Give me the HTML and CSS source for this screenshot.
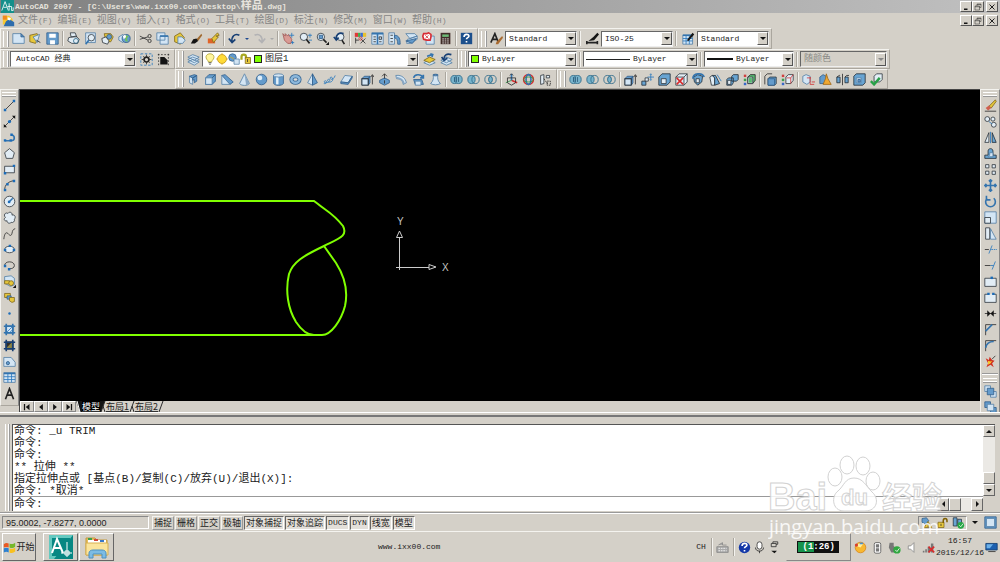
FILE: index.html
```html
<!DOCTYPE html>
<html lang="zh-CN">
<head>
<meta charset="utf-8">
<title>AutoCAD 2007</title>
<link rel="stylesheet" href="styles.css">
</head>
<body>
<svg class="defs" aria-hidden="true">
  <symbol id="union" viewBox="0 0 16 16"><ellipse class="t" cx="5.500" cy="8" rx="4.500" ry="5"/><ellipse class="t" cx="10.500" cy="8" rx="4.500" ry="5"/><path class="k2" d="M5.500 5v6M8 5v6M10.500 5v6"/></symbol>
  <symbol id="subtract" viewBox="0 0 16 16"><ellipse class="t" cx="5.500" cy="8" rx="4.500" ry="5"/><ellipse class="o" cx="10.500" cy="8" rx="4.500" ry="5"/></symbol>
  <symbol id="intersect" viewBox="0 0 16 16"><ellipse class="o" cx="5.500" cy="8" rx="4.500" ry="5"/><ellipse class="o" cx="10.500" cy="8" rx="4.500" ry="5"/><path class="t" d="M8 4c3 2 3 6 0 8-3-2-3-6 0-8z"/></symbol>
  <symbol id="extrude" viewBox="0 0 16 16"><path class="l" d="M1 7h8v8H1z"/><path class="m" d="M1 7l3-3h7L9 7zM9 7l2-3v8l-2 3z"/><path class="k" d="M1 7h8v8H1zM14 14V3M12 5l2-3 2 3"/></symbol>
  <symbol id="box" viewBox="0 0 16 16"><path class="m" d="M2 6l4-4h8v8l-4 4H2z"/><path class="l" d="M2 6h8v8H2z"/><path class="k2" d="M10 6l4-4"/></symbol>
  <symbol id="min" viewBox="0 0 16 16"><path class="d" d="M4 11h7v3H4z"/></symbol>
  <symbol id="restore" viewBox="0 0 16 16"><path class="k" d="M6 6V2h8v7h-3M2 6h9v8H2zM2 7.500h9M6 3h8"/></symbol>
  <symbol id="close" viewBox="0 0 16 16"><path class="kk" d="M3 3l10 10M13 3L3 13"/></symbol>
  <symbol id="layers" viewBox="0 0 16 16"><path class="l" d="M1 11l6-3 8 3-6 4zM1 8l6-3 8 3-6 4zM1 5l6-3 8 3-6 4z"/></symbol>
</svg>

<header class="title">
  <svg class="logo" viewBox="0 0 16 16"><path fill="#138f8b" d="M0 0h16v16H0z"/><path class="w" d="M1 13L5 2l4 11M3 9h4M10 4v9M8 8h5v5h2V9"/></svg>
  <h1>AutoCAD 2007 - [C:\Users\www.ixx00.com\Desktop\<span class="cjk">样品</span>.dwg]</h1>
  <div class="wins">
    <button aria-label="最小化"><svg><use href="#min"/></svg></button><button aria-label="还原"><svg><use href="#restore"/></svg></button><button aria-label="关闭"><svg><use href="#close"/></svg></button>
  </div>
</header>

<nav class="menu">
  <svg class="logo" viewBox="0 0 16 16"><path fill="#f8c830" d="M1 2h8l4 4v7H1z"/><path fill="#f08820" d="M1 2h5v5H1z"/><path fill="#2d6cac" d="M5 9l4-3 6 4v5H2z"/><path fill="#fff" d="M7 4l4 1-1 3-3-1z"/></svg>
  <button>文件<small>(F)</small></button><button>编辑<small>(E)</small></button><button>视图<small>(V)</small></button><button>插入<small>(I)</small></button><button>格式<small>(O)</small></button><button>工具<small>(T)</small></button><button>绘图<small>(D)</small></button><button>标注<small>(N)</small></button><button>修改<small>(M)</small></button><button>窗口<small>(W)</small></button><button>帮助<small>(H)</small></button>
  <div class="wins">
    <button aria-label="最小化图形"><svg><use href="#min"/></svg></button><button aria-label="还原图形"><svg><use href="#restore"/></svg></button><button aria-label="关闭图形"><svg><use href="#close"/></svg></button>
  </div>
</nav>

<div class="row first">
  <div class="bar"><i class="grip"></i>
    <button aria-label="新建"><svg viewBox="0 0 16 16"><path class="l" d="M1 2h10l4 4v8H1z"/><path class="m" d="M11 2v4h4z"/></svg></button>
    <button aria-label="打开"><svg viewBox="0 0 16 16"><path class="y" d="M1 4l9-2 2 3-4 9-7-2z"/><path class="l" d="M5 6l8-3-3 10z"/><path class="k" d="M9 10l5 3"/></svg></button>
    <button aria-label="保存"><svg viewBox="0 0 16 16"><path class="m" d="M1 1h14v14H1z"/><path fill="#fff" d="M4 2h8v5H4zM5 10h6v5H5z"/></svg></button>
    <i class="sep"></i>
    <button aria-label="打印"><svg viewBox="0 0 16 16"><path class="lk" d="M4 1h6l2 5H5zM2 7l9-2 4 4-2 5H6L1 11z"/><circle class="o" cx="11" cy="11" r="3"/></svg></button>
    <button aria-label="打印预览"><svg viewBox="0 0 16 16"><path class="l" d="M2 1h12v12H2z"/><circle class="lk" cx="9" cy="7" r="4"/><path class="bb" d="M6 10l-4 5"/></svg></button>
    <button aria-label="发布"><svg viewBox="0 0 16 16"><path class="y" d="M4 2h8l3 4-3 6H6z"/><circle class="m" cx="10" cy="6" r="3"/><path class="lk" d="M1 8l5-2 4 5-2 4-6-2z"/></svg></button>
    <button aria-label="三维 DWF"><svg viewBox="0 0 16 16"><path class="l" d="M1 6l5-3 3 5-3 5-5-3z"/><circle class="m" cx="10" cy="8" r="5"/><path fill="#72c257" d="M9 4l4 1-2 3 1 4-3-1z"/><path fill="#fff" d="M6 5l3-2 1 3-3 3z"/></svg></button>
    <i class="sep"></i>
    <button aria-label="剪切"><svg viewBox="0 0 16 16"><path class="k" d="M1 5l10 5M1 9l10-3"/><circle class="k" cx="13" cy="5" r="2"/><circle class="k" cx="13" cy="11" r="2"/></svg></button>
    <button aria-label="复制"><svg viewBox="0 0 16 16"><path class="l" d="M1 1h10v9H1zM5 5h10v10H5z"/><path class="bb" d="M5 5h10"/></svg></button>
    <button aria-label="粘贴"><svg viewBox="0 0 16 16"><path class="y" d="M2 5l7-4 5 6-5 8-7-3z"/><path class="l" d="M6 6h5l4 4-3 4H6z"/></svg></button>
    <button aria-label="特性匹配"><svg viewBox="0 0 16 16"><path fill="#a06a30" d="M8 9l6-7 1 2-5 7z"/><path class="d" d="M1 14l3-5 4-1 2 3-4 3z"/></svg></button>
    <button aria-label="块编辑器"><svg viewBox="0 0 16 16"><path fill="#e06428" d="M1 8h9v6H1z"/><path class="y" d="M6 8l7-7 2 3-4 1 3 1-6 7z"/></svg></button>
    <i class="sep"></i>
    <button aria-label="放弃"><svg viewBox="0 0 16 16"><path class="navy" d="M14 4C8 1 4 6 5 12M1 8l4 5 4-4"/></svg></button>
    <button class="tiny" aria-label="放弃列表"><b class="tri blue"></b></button>
    <button aria-label="重做"><svg viewBox="0 0 16 16"><path class="gr" d="M2 4c6-3 10 2 9 8M7 9l4 4 4-5"/></svg></button>
    <button class="tiny" aria-label="重做列表"><b class="tri grey"></b></button>
    <i class="sep"></i>
    <button aria-label="实时平移"><svg viewBox="0 0 16 16"><path fill="#d99a94" stroke="#a05a58" d="M1 2l3 3V2l3 3 1-2 4 6-1 5H7L3 10z"/><path class="b" d="M12 1v6M9 4h6M13 11v4M11 13h4"/></svg></button>
    <button aria-label="实时缩放"><svg viewBox="0 0 16 16"><circle class="lk" cx="6" cy="6" r="4.500"/><path class="kk" d="M9 9l4 5"/><path class="b" d="M11 4h5M13.500 2v5M12 10h4"/></svg></button>
    <button aria-label="窗口缩放"><svg viewBox="0 0 16 16"><circle class="lk" cx="6" cy="6" r="4.500"/><path class="m" d="M4 4h4v4H4z"/><path class="kk" d="M9 9l4 4"/><path class="d" d="M16 12v4h-4z"/></svg></button>
    <button aria-label="缩放上一个"><svg viewBox="0 0 16 16"><circle class="lk" cx="9" cy="6" r="4.500"/><path class="kk" d="M11 10l3 5"/><path class="navy" d="M13 2C7 0 3 4 4 9M1 6l3 4 3-3"/></svg></button>
    <i class="sep"></i>
    <button aria-label="特性"><svg viewBox="0 0 16 16"><path fill="#e03838" d="M1 1h4v5H1z"/><path fill="#3cae48" d="M5 1h3v5H5z"/><path fill="#386cd8" d="M8 1h3v5H8z"/><path fill="#e8c030" d="M11 1h4v5h-4z"/><path class="k" d="M2 7v7M2 10h4M8 8l6 6M14 8l-6 6"/><circle class="r" cx="8" cy="8" r="2"/></svg></button>
    <button aria-label="设计中心"><svg viewBox="0 0 16 16"><path class="l" d="M1 1h14v14H1z"/><path class="bb" d="M1 2h14M8 2v13"/><path class="k" d="M3 6h3M3 9h3M3 12h3M10 6h3v3h-3zM10 12h3"/></svg></button>
    <button aria-label="工具选项板"><svg viewBox="0 0 16 16"><path class="l" d="M1 1h7v14H1z"/><path class="k" d="M3 4h3M3 8h3M3 12h3"/><path class="m" d="M8 4c6 0 7 5 7 11h-3c0-5-1-7-4-8z"/></svg></button>
    <button aria-label="图纸集"><svg viewBox="0 0 16 16"><path class="l" d="M1 2h11l3 3-9 3zM3 9l12-4v4l-8 5H2z"/><path class="m" d="M1 11l13-3-5 6z"/></svg></button>
    <button aria-label="标记集"><svg viewBox="0 0 16 16"><path class="l" d="M5 5h10v10H5z"/><path fill="#fff" stroke="#d82c34" stroke-width="2" d="M2 2h4l2-1 3 2v3l-1 4H6L2 9 1 5z"/><path class="r" d="M4 4l4 4M8 4L4 8"/></svg></button>
    <button aria-label="计算器"><svg viewBox="0 0 16 16"><path fill="#402c28" d="M2 1h12v14H2z"/><path fill="#6dba76" d="M4 3h8v3H4z"/><path class="w" stroke-dasharray="2 1" d="M4 8.500h8M4 11h8M4 13.500h8"/></svg></button>
    <i class="sep"></i>
    <button aria-label="帮助"><svg viewBox="0 0 16 16"><path fill="#1c4f8c" d="M1 1h14v14H1z"/><path class="ww" d="M5 6c0-4 6-4 6-1 0 2-3 2-3 4M8 11v2"/></svg></button>
  </div>
  <div class="bar"><i class="grip"></i>
    <button aria-label="文字样式"><svg viewBox="0 0 16 16"><path class="kk" d="M1 13L6 2l4 10M3 9h6"/><path fill="#a86a30" d="M8 12l7-7 1 2-6 8H7z"/></svg></button>
    <label class="combo w72"><select aria-label="文字样式名"><option>Standard</option></select><i class="drop"></i></label>
    <i class="sep"></i>
    <button class="wide" aria-label="标注样式"><svg viewBox="0 0 16 16"><path class="kk" d="M1 11v4M1 13h13M14 11v4"/><path class="d" d="M3 11l6-5 5-5 2 2-6 7z"/></svg></button>
    <label class="combo w72"><select aria-label="标注样式名"><option>ISO-25</option></select><i class="drop"></i></label>
    <i class="sep"></i>
    <button class="wide" aria-label="表格样式"><svg viewBox="0 0 16 16"><path class="l" d="M1 4h12v11H1z"/><path class="b" d="M1 8h12M1 11h12M5 4v11M9 4v11"/><path class="bb" d="M1 4h12"/><path class="d" d="M6 10l7-9 2 2-7 8z"/></svg></button>
    <label class="combo w72"><select aria-label="表格样式名"><option>Standard</option></select><i class="drop"></i></label>
  </div>
</div>

<div class="row">
  <div class="bar"><i class="grip"></i>
    <label class="combo w126 ink"><select aria-label="工作空间"><option>AutoCAD 经典</option></select><i class="drop"></i></label>
    <i class="gap"></i>
    <button aria-label="工作空间设置"><svg viewBox="0 0 16 16"><path class="b" stroke-dasharray="3 2" d="M1 1h14v14H1z"/><circle class="kk" cx="8" cy="8" r="3"/><path class="k" d="M8 2v3M8 11v3M2 8h3M11 8h3M4 4l2 2M10 10l2 2M12 4l-2 2M6 10l-2 2"/></svg></button>
    <button aria-label="我的工作空间"><svg viewBox="0 0 16 16"><path class="k" stroke-dasharray="2 2" d="M1 2h14M2 1v14M14 1v14"/><path class="d" d="M4 5h5l4 4v5H4z"/></svg></button>
  </div>
  <div class="bar"><i class="grip"></i>
    <button aria-label="图层特性管理器"><svg><use href="#layers"/></svg></button>
    <label class="combo w217 ink">
      <svg viewBox="0 0 16 16"><path class="y2" d="M5 10C0 5 4 1 8 1s8 4 3 9l-1 2H6z"/><path class="k" d="M6 13h4M7 15h2"/></svg>
      <svg viewBox="0 0 16 16"><circle cx="8" cy="8" r="6" fill="#ffdb38" stroke="#c09010"/><path class="y1" d="M8 0v2M8 14v2M0 8h2M14 8h2"/></svg>
      <svg viewBox="0 0 16 16"><circle class="m" cx="6" cy="6" r="5"/><path class="l" d="M8 8h7v7H8z"/><path class="y1" d="M3 5l5 3"/></svg>
      <svg viewBox="0 0 16 16"><path fill="none" stroke="#a8a820" stroke-width="3" d="M2 9V5c0-4 6-4 6 0v3"/><path class="y" d="M7 6h7v8H7z"/><path class="k" d="M10 8v4"/></svg>
      <i class="swatch"></i>
      <select aria-label="图层"><option>图层1</option></select><i class="drop"></i></label>
    <i class="gap"></i>
    <button aria-label="置为当前图层"><svg viewBox="0 0 16 16"><path class="l" d="M1 12l7-4 7 4-7 3z"/><path class="y" d="M1 9l7-4 7 3-7 4z"/><path class="bb" d="M5 4l6-2M9 1l3 1-1 3"/></svg></button>
    <button aria-label="上一个图层"><svg viewBox="0 0 16 16"><path class="l" d="M1 12l7-4 7 4-7 3zM1 9l7-4 7 3-7 4z"/><path class="navy" d="M14 2C8 0 5 3 5 7M2 5l3 4 4-3"/></svg></button>
  </div>
  <div class="bar"><i class="grip"></i>
    <label class="combo w109"><i class="swatch"></i><select aria-label="颜色"><option>ByLayer</option></select><i class="drop"></i></label>
    <i class="sep"></i>
    <label class="combo w115"><i class="thin"></i><select aria-label="线型"><option>ByLayer</option></select><i class="drop"></i></label>
    <i class="sep"></i>
    <label class="combo w90"><i class="thick"></i><select aria-label="线宽"><option>ByLayer</option></select><i class="drop"></i></label>
    <i class="sep"></i>
    <label class="combo w87 off"><select aria-label="打印样式" disabled><option>随颜色</option></select><i class="drop"></i></label>
  </div>
</div>

<div class="row third">
  <div class="bar"><i class="grip"></i>
    <button aria-label="多段体"><svg viewBox="0 0 16 16"><path class="l" d="M3 4l4 2v8l-4-2z"/><path class="m" d="M7 6l5-3v7l-3 2V8l-2 1zM3 4l6-2 3 1-5 3z"/></svg></button>
    <button aria-label="长方体"><svg><use href="#box"/></svg></button>
    <button aria-label="楔体"><svg viewBox="0 0 16 16"><path class="m" d="M1 3l4-1 10 9-4 3z"/><path class="l" d="M1 3l10 11H1z"/></svg></button>
    <button aria-label="圆锥体"><svg viewBox="0 0 16 16"><path class="l" d="M8 1l6 12c-2 3-10 3-12 0z"/><path class="sh" d="M8 1l6 12c-1 1-3 2-4 2z"/></svg></button>
    <button aria-label="球体"><svg viewBox="0 0 16 16"><circle class="m" cx="8" cy="8" r="6.500"/><circle cx="6" cy="6" r="3" fill="#dcecf8"/></svg></button>
    <button aria-label="圆柱体"><svg viewBox="0 0 16 16"><path class="m" d="M2 3v10c2 3 10 3 12 0V3z"/><path fill="#e2f0fa" d="M5 5h3v9H5z"/><ellipse class="l" cx="8" cy="3" rx="6" ry="2"/></svg></button>
    <button aria-label="圆环体"><svg viewBox="0 0 16 16"><ellipse cx="8" cy="8" rx="5" ry="4" fill="#ddd" stroke="#3a6894" stroke-width="5"/><ellipse cx="8" cy="8" rx="5" ry="4" fill="none" stroke="#8cb8dc" stroke-width="3"/></svg></button>
    <button aria-label="棱锥面"><svg viewBox="0 0 16 16"><path class="l" d="M8 1L2 12l6 3z"/><path class="m" d="M8 1l6 11-6 3z"/></svg></button>
    <button aria-label="螺旋"><svg viewBox="0 0 16 16"><path class="b" d="M1 13c5 1 4-5 1-3s4 3 6 0-4-3-2 0 7 0 6-3-4-2-3 0 5 0 6-4"/></svg></button>
    <button aria-label="平面曲面"><svg viewBox="0 0 16 16"><path class="l" d="M1 11l5-8 9 1-5 8z"/><path class="m" d="M1 11l9 1 5-8v2l-5 8-9-1z"/></svg></button>
    <i class="sep"></i>
    <button aria-label="拉伸"><svg><use href="#extrude"/></svg></button>
    <button aria-label="按住并拖动"><svg viewBox="0 0 16 16"><path class="m" d="M2 9l6-3 6 3v3l-6 3-6-3z"/><path class="k" d="M8 1v6M5 4l3-3 3 3M8 9v4"/></svg></button>
    <button aria-label="扫掠"><svg viewBox="0 0 16 16"><path class="l" d="M1 3c8-1 12 4 13 9l-4 2c0-4-3-7-8-7z"/><path class="sh" d="M1 5c6 0 10 3 11 8l-2 1c0-4-3-7-8-7z"/></svg></button>
    <button aria-label="旋转"><svg viewBox="0 0 16 16"><path class="m" d="M2 8h10l2 6H4z"/><path class="l" d="M4 10h7v5H4z"/><path class="bb" d="M2 6c1-5 9-5 11-1M14 2v4h-4"/></svg></button>
    <button aria-label="放样"><svg viewBox="0 0 16 16"><path class="l" d="M5 2h6c-1 5 0 8 3 11-3 2-9 2-12 0 3-3 4-6 3-11z"/><ellipse class="m" cx="8" cy="2.500" rx="3" ry="1"/></svg></button>
    <i class="sep"></i>
    <button aria-label="并集"><svg><use href="#union"/></svg></button>
    <button aria-label="差集"><svg><use href="#subtract"/></svg></button>
    <button aria-label="交集"><svg><use href="#intersect"/></svg></button>
    <i class="sep"></i>
    <button aria-label="三维移动"><svg viewBox="0 0 16 16"><path class="rr" d="M8 9l7 3"/><path class="bb" d="M8 9V1"/><path class="gn" d="M8 9l-7 3"/><path class="k" d="M3 6h10v6l-5 3-5-3zM6 3l2-2 2 2"/></svg></button>
    <button aria-label="三维旋转"><svg viewBox="0 0 16 16"><circle class="rr" cx="8" cy="8" r="6"/><ellipse class="bb" cx="8" cy="8" rx="3" ry="6"/><ellipse class="gn" cx="8" cy="8" rx="6" ry="3"/></svg></button>
    <button aria-label="三维对齐"><svg viewBox="0 0 16 16"><path class="lk" d="M2 3l4-1v11l-4 1zM9 3h4v3H9z"/><path class="k" stroke-dasharray="2 1" d="M6 7l5 7M10 10h4v5h-4z"/></svg></button>
  </div>
  <div class="bar"><i class="grip"></i>
    <button aria-label="实体并集"><svg><use href="#union"/></svg></button>
    <button aria-label="实体差集"><svg><use href="#subtract"/></svg></button>
    <button aria-label="实体交集"><svg><use href="#intersect"/></svg></button>
    <i class="sep"></i>
    <button aria-label="拉伸面"><svg><use href="#extrude"/></svg></button>
    <button aria-label="移动面"><svg viewBox="0 0 16 16"><path class="mk" d="M1 10h5v5H1z"/><path class="lk" d="M5 6h4v4H5z"/><path class="b" d="M12 1v8M8 5h8M11 2l1-1 1 1M11 8l1 1 1-1"/></svg></button>
    <button aria-label="偏移面"><svg viewBox="0 0 16 16"><path class="mk" d="M1 5l4-4h10v10l-4 4H1z"/><path class="lk" d="M4 7h6v6H4z"/></svg></button>
    <button aria-label="删除面"><svg viewBox="0 0 16 16"><path class="lk" d="M1 5l4-4h10v10l-4 4H1zM1 5h10v10M11 5l4-4"/><path class="rr" d="M2 6l8 8M10 6l-8 8"/></svg></button>
    <button aria-label="旋转面"><svg viewBox="0 0 16 16"><path class="mk" d="M2 5l5-3 6 2-1 7-5 4-4-4z"/><path class="lk" d="M5 7h4v5H5z"/><path class="bb" d="M1 7c0-7 12-8 14-2"/></svg></button>
    <button aria-label="倾斜面"><svg viewBox="0 0 16 16"><path class="lk" d="M1 5l3-2 3 3v9H3z"/><path class="mk" d="M4 3h4l5 10-6 2V6z"/><path class="b" d="M10 2l5 8"/></svg></button>
    <button aria-label="复制面"><svg viewBox="0 0 16 16"><path class="mk" d="M7 4l2-2h6v6l-2 2H7zM1 8l2-2h6v6l-2 3H1z"/><path class="lk" d="M2 9h4v5H2z"/></svg></button>
    <button aria-label="着色面"><svg viewBox="0 0 16 16"><path fill="#d04040" d="M1 2h3v3H1z"/><path fill="#3ca050" d="M1 7h3v3H1z"/><path fill="#3868c8" d="M1 12h3v3H1z"/><path fill="#5ab872" stroke="#222" d="M6 5l3-3h6v7l-3 4H6z"/><path class="lk" d="M6 5h6v8H6z"/><path fill="#5ab872" d="M7 6h4v6H7z"/></svg></button>
    <i class="sep"></i>
    <button aria-label="复制边"><svg viewBox="0 0 16 16"><path class="mk" d="M5 7l2-2h8v8l-2 2H5z"/><path class="m" d="M5 7h8v8H5z"/><path class="k" d="M1 14V4l3-3h6"/></svg></button>
    <button aria-label="着色边"><svg viewBox="0 0 16 16"><path fill="#d04040" d="M1 2h3v3H1z"/><path fill="#3ca050" d="M1 7h3v3H1z"/><path fill="#3868c8" d="M1 12h3v3H1z"/><path class="lk" d="M6 5l3-3h6v7l-3 4H6z"/><path class="r" d="M7 6h5v7M12 6l3-4"/></svg></button>
    <i class="sep"></i>
    <button aria-label="压印"><svg viewBox="0 0 16 16"><path class="l" d="M1 4l4-2 5 2v7l-4 3-5-3z"/><path class="r" d="M10 5v9h5M12 11h4M6 6h5"/></svg></button>
    <button aria-label="清除"><svg viewBox="0 0 16 16"><path class="m" d="M1 5l4-3 4 2v9H1z"/><path fill="#f0a830" stroke="#a06818" d="M9 1l2 6 4 7H5l3-7z"/></svg></button>
    <button aria-label="分割"><svg viewBox="0 0 16 16"><path class="mk" d="M1 5h4v7H1zM11 5h4v7h-4z"/><path class="k" d="M8 1v14M1 5l3-2h1M11 5l2-2h3"/></svg></button>
    <button aria-label="抽壳"><svg viewBox="0 0 16 16"><path class="mk" d="M1 4l3-3h11v11l-3 3H1z"/><path class="l" d="M4 6h6v6H4z"/><path class="m" d="M6 8h3v3H6z"/></svg></button>
    <button aria-label="检查"><svg viewBox="0 0 16 16"><path class="lk" d="M5 4l3-3h7v7l-3 3H5z"/><path fill="none" stroke="#28a048" stroke-width="3" d="M1 10l4 4 7-8"/></svg></button>
  </div>
</div>

<main class="work">
  <aside class="side"><i class="hgrip"></i>
    <button aria-label="直线"><svg viewBox="0 0 16 16"><path class="k" d="M3 13L13 3"/><path class="dot" d="M1 12h3v3H1zM12 1h3v3h-3z"/></svg></button>
    <button aria-label="构造线"><svg viewBox="0 0 16 16"><path class="k" d="M1 15L15 1"/><path class="d" d="M1 15v-4l4 4zM15 1v4l-4-4z"/><circle class="dot" cx="8" cy="8" r="2"/></svg></button>
    <button aria-label="多段线"><svg viewBox="0 0 16 16"><path class="bb" d="M2 12h8c5 0 5-6 1-7"/><path class="dot" d="M1 10h3v3H1zM9 3h3v3H9zM8 10h3v3H8z"/></svg></button>
    <button aria-label="正多边形"><svg viewBox="0 0 16 16"><path class="lk" d="M8 2l6 5-2 7H4L2 7z"/></svg></button>
    <button aria-label="矩形"><svg viewBox="0 0 16 16"><path class="lk" d="M2 4h12v8H2z"/><path class="dot" d="M1 11h3v3H1zM12 2h3v3h-3z"/></svg></button>
    <button aria-label="圆弧"><svg viewBox="0 0 16 16"><path class="k" d="M2 14C2 7 6 3 14 2"/><path class="dot" d="M1 12h3v3H1zM4 5h3v3H4zM12 1h3v3h-3z"/></svg></button>
    <button aria-label="圆"><svg viewBox="0 0 16 16"><circle class="lk" cx="8" cy="8" r="6.500"/><path class="bb" d="M8 8l4-4"/><path class="dot" d="M6 7h3v3H6z"/></svg></button>
    <button aria-label="修订云线"><svg viewBox="0 0 16 16"><path class="lk" d="M3 8C0 5 3 1 6 3c2-3 6-1 5 2 4-1 5 3 3 5 1 3-2 5-4 4-2 2-5 1-5-2-3 1-5-2-2-4z"/></svg></button>
    <button aria-label="样条曲线"><svg viewBox="0 0 16 16"><path class="k" d="M1 15C2 7 4 6 6 8s4 4 5 0 1-5 4-6"/></svg></button>
    <button aria-label="椭圆"><svg viewBox="0 0 16 16"><ellipse class="lk" cx="8" cy="8" rx="6" ry="4"/><path class="dot" d="M1 7h3v3H1zM12 7h3v3h-3zM7 2h3v3H7z"/></svg></button>
    <button aria-label="椭圆弧"><svg viewBox="0 0 16 16"><path class="k" d="M2 8c0-6 12-6 12 0 0 3-3 4-6 4"/><path class="dot" d="M1 7h3v3H1zM6 11h3v3H6z"/></svg></button>
    <button aria-label="插入块"><svg viewBox="0 0 16 16"><path class="l" d="M2 2l8-1 4 3v8l-5 2-7-4z"/><path class="y" d="M2 7h6v4H2z"/><circle class="y" cx="10" cy="10" r="3"/><path class="d" d="M16 12v4h-4z"/></svg></button>
    <button aria-label="创建块"><svg viewBox="0 0 16 16"><path class="y" d="M2 3h7v5H2z"/><path class="m" d="M5 6h5v4H5z"/><path class="y" d="M8 8h6v5l-3 1-3-2z"/></svg></button>
    <button aria-label="点"><svg viewBox="0 0 16 16"><circle class="dot" cx="8" cy="8" r="1.500"/></svg></button>
    <button aria-label="图案填充"><svg viewBox="0 0 16 16"><path class="l" d="M3 3h10v10H3z"/><path class="bb" d="M4 1v14M12 1v14M1 4h14M1 12h14"/><path class="b" d="M5 11l6-6M8 12l4-4"/></svg></button>
    <button aria-label="渐变色"><svg viewBox="0 0 16 16"><path fill="#302c28" d="M3 3h10v10H3z"/><path fill="#8c8448" d="M4 11l7-7v7z"/><path class="navy" d="M4 1v14M12 1v14M1 4h14M1 12h14"/></svg></button>
    <button aria-label="面域"><svg viewBox="0 0 16 16"><path class="l" d="M1 3h9l5 6v5H1z"/><circle cx="6" cy="10" r="2" class="m"/></svg></button>
    <button aria-label="表格"><svg viewBox="0 0 16 16"><path class="l" d="M1 2h14v12H1z"/><path class="bb" d="M1 3h14"/><path class="b" d="M1 7h14M1 10.500h14M6 3v11M10.500 3v11"/></svg></button>
    <button aria-label="多行文字"><svg viewBox="0 0 16 16"><path class="kk" d="M3 15L8 2l5 13M5 10h6"/></svg></button>
  </aside>

  <section class="view">
    <svg class="canvas" viewBox="20 91 960 310" preserveAspectRatio="xMinYMin meet" role="img" aria-label="图形">
      <g fill="none" stroke="#80ff00" stroke-width="2">
        <path d="M20 202H314L318 205C325 211 333 214 343 227C348 237 340 239 324 247C303 257 293 263 289 275C285 292 288 310 296 323C302 332 308 336 314 336"/>
        <path d="M324 247L336 264C345 278 348 293 345 307C341 322 331 336 322 336H20"/>
      </g>
      <path fill="none" stroke="#ccc" d="M396 268.500H429M399.500 271V238M396.500 238.500L399.500 232L402.500 238.500ZM429 265.500L436 268L429 270.500Z"/>
      <g class="axis"><text x="397" y="226">Y</text><text x="442" y="272">X</text></g>
    </svg>
    <div class="tabs">
      <button class="nav" aria-label="第一个"><svg viewBox="0 0 16 16"><path class="d" d="M3 3h2v10H3zM12 3v10L6 8z"/></svg></button><button class="nav" aria-label="上一个"><svg viewBox="0 0 16 16"><path class="d" d="M11 3v10L5 8z"/></svg></button><button class="nav" aria-label="下一个"><svg viewBox="0 0 16 16"><path class="d" d="M5 3v10l6-5z"/></svg></button><button class="nav" aria-label="最后一个"><svg viewBox="0 0 16 16"><path class="d" d="M11 3h2v10h-2zM4 3v10l6-5z"/></svg></button>
      <svg class="edge" viewBox="0 0 6 11"><path class="d" d="M0 0h6v11H4z"/><path class="w" d="M1 0l3 11"/></svg><button class="tab on">模型</button><svg class="edge" viewBox="0 0 6 11"><path class="d" d="M0 0h5L1 11H0z"/><path class="k" d="M5 0L1 11M3 5l2 6"/></svg><button class="tab">布局1</button><svg class="edge" viewBox="0 0 6 11"><path class="k" d="M5 0L1 11M3 5l2 6"/></svg><button class="tab">布局2</button><svg class="edge" viewBox="0 0 6 11"><path class="k" d="M5 0L1 11"/></svg>
    </div>
  </section>

  <aside class="side right"><i class="hgrip"></i>
    <button aria-label="删除"><svg viewBox="0 0 16 16"><path class="y" d="M6 9l8-8 1 2-6 8z"/><path fill="#d06050" d="M2 11l4-3 3 3-4 3z"/><path class="k" d="M1 15h14"/></svg></button>
    <button aria-label="复制对象"><svg viewBox="0 0 16 16"><circle class="lk" cx="4" cy="5" r="3"/><circle class="lk" cx="11" cy="5" r="2.500"/><circle class="lk" cx="12" cy="12" r="3"/><path class="b" d="M6 8l4 3"/></svg></button>
    <button aria-label="镜像"><svg viewBox="0 0 16 16"><path class="lk" d="M6 2v12H1z"/><path class="mk" d="M10 2v12h5z"/><path class="b" d="M8 1v14"/></svg></button>
    <button aria-label="偏移"><svg viewBox="0 0 16 16"><path class="mk" d="M1 14v-4h4V5c0-4 6-4 6 0v5h4v4z"/><path class="l" d="M5 12h6V7H7v3z"/></svg></button>
    <button aria-label="阵列"><svg viewBox="0 0 16 16"><path class="lk2" d="M2 2h4v4H2zM10 2h4v4h-4zM2 10h4v4H2zM10 10h4v4h-4z"/></svg></button>
    <button aria-label="移动"><svg viewBox="0 0 16 16"><path class="bb" d="M8 1v14M1 8h14M6 3l2-2 2 2M6 13l2 2 2-2M3 6L1 8l2 2M13 6l2 2-2 2"/></svg></button>
    <button aria-label="旋转对象"><svg viewBox="0 0 16 16"><path class="bb" d="M12 4a6 6 0 1 1-8 0M3 1v5h5"/></svg></button>
    <button aria-label="缩放"><svg viewBox="0 0 16 16"><path class="l" d="M1 1h14v14H1z"/><path class="lk" d="M1 8h7v7H1z"/></svg></button>
    <button aria-label="拉伸对象"><svg viewBox="0 0 16 16"><path class="lk" d="M2 1h5v14H2z"/><path class="l" d="M8 2l7 13H8z"/></svg></button>
    <button aria-label="修剪"><svg viewBox="0 0 16 16"><path class="k" d="M1 8h5"/><path class="b" d="M6 13L10 3"/><path class="b" stroke-dasharray="2 1" d="M9 8h7"/></svg></button>
    <button aria-label="延伸"><svg viewBox="0 0 16 16"><path class="k" d="M1 8h7"/><path class="b" d="M8 8h4M10 13l4-10"/></svg></button>
    <button aria-label="打断于点"><svg viewBox="0 0 16 16"><path class="lk" d="M1 4h14v10H1z"/><path class="dot" d="M8 2h3v3H8z"/></svg></button>
    <button aria-label="打断"><svg viewBox="0 0 16 16"><path class="lk" d="M5 4H1v10h14V4h-4"/><path class="dot" d="M4 2h3v3H4zM10 2h3v3h-3z"/></svg></button>
    <button aria-label="合并"><svg viewBox="0 0 16 16"><path class="k" d="M1 8h14"/><path class="d" d="M4 4l4 4-4 4zM12 4L8 8l4 4z"/></svg></button>
    <button aria-label="倒角"><svg viewBox="0 0 16 16"><path class="k" d="M2 15V8M8 2h7M2 2h6M2 2v6"/><path class="bb" d="M2 10l8-8"/></svg></button>
    <button aria-label="圆角"><svg viewBox="0 0 16 16"><path class="k" d="M2 15V2h13"/><path class="bb" d="M2 11C3 5 6 3 12 3"/></svg></button>
    <button aria-label="分解"><svg viewBox="0 0 16 16"><path fill="#d03020" d="M2 4l4 2 1-4 3 4 3 1-3 3 2 5-4-3-5 3 2-5z"/><path fill="#f8d030" d="M5 7l3 1 2-1-2 3-3 2z"/><path class="k" d="M10 5l4-4"/></svg></button>
    <i class="split"></i><i class="hgrip"></i>
    <button aria-label="前置"><svg viewBox="0 0 16 16"><path class="l" d="M1 1h7v7H1zM8 8h7v7H8z"/><path class="m" d="M4 4h8v8H4z"/></svg></button>
    <button aria-label="后置"><svg viewBox="0 0 16 16"><path class="m" d="M1 1h7v7H1zM8 8h7v7H8z"/><path class="l" d="M4 4h8v8H4z"/></svg></button>
  </aside>
</main>

<section class="command">
  <i class="cgrip"></i>
  <div class="console">
    <pre>命令: _u TRIM
命令:
命令:
** 拉伸 **
指定拉伸点或 [基点(B)/复制(C)/放弃(U)/退出(X)]:
命令: *取消*</pre>
    <div class="vscroll"><button aria-label="向上滚动"><b class="tri up"></b></button><i class="track"></i><i class="thumb"></i><button aria-label="向下滚动"><b class="tri"></b></button></div>
    <div class="prompt"><label for="cmd">命令:</label><input id="cmd" type="text">
      <div class="hscroll"><button aria-label="向左滚动"><b class="tri left"></b></button><i class="thumb"></i><i class="track"></i><button aria-label="向右滚动"><b class="tri rt"></b></button></div>
    </div>
  </div>
</section>

<section class="status">
  <output>95.0002, -7.8277, 0.0000</output>
  <button>捕捉</button><button>栅格</button><button>正交</button><button>极轴</button><button class="on">对象捕捉</button><button class="on">对象追踪</button><button class="on lat">DUCS</button><button class="on lat">DYN</button><button class="on">线宽</button><button class="on">模型</button>
  <div class="tray">
    <svg viewBox="0 0 16 16"><path class="m" d="M2 2l6-1 3 4-4 5-5-3z"/><path class="y" d="M10 6l5 8H5z"/><path class="k" d="M10 8v3M10 12v1"/></svg>
    <svg viewBox="0 0 16 16"><path class="y" d="M2 7h8v7H2z"/><path fill="none" stroke="#806000" stroke-width="2" d="M9 8V5c0-4 5-4 5 0v2"/><path class="k" d="M6 9v3"/></svg>
    <svg viewBox="0 0 16 16"><path class="mk" d="M1 1h5v11H1zM7 3h5v9H7z"/><circle cx="11" cy="11" r="4.500" fill="#28a848"/><path class="w" d="M9 11l2 2 3-4"/></svg>
  </div>
  <button class="more" aria-label="状态栏菜单"><b class="tri"></b></button>
  <button class="clean" aria-label="全屏显示"><svg viewBox="0 0 16 16"><path class="m" d="M1 1h14v14H1z"/><path class="l" d="M3 3h10v10H3z"/></svg></button>
</section>

<footer class="taskbar">
  <button class="start"><svg viewBox="0 0 16 16"><path fill="#e85a24" d="M1 4c2-2 4-2 6-1v5C5 7 3 7 1 8z"/><path fill="#76b82a" d="M8 3c2 1 5 1 7-1v5c-2 2-5 2-7 1z"/><path fill="#2c80d0" d="M1 9c2-1 4-1 6 0v5c-2-1-4-1-6 0z"/><path fill="#f8c020" d="M8 9c2 1 5 1 7-1v5c-2 2-5 2-7 1z"/></svg>开始</button>
  <button class="app" aria-label="AutoCAD"><svg viewBox="0 0 24 24"><path fill="#078783" d="M0 0h24v24H0z"/><path fill="#65c9c0" d="M0 0h24L5 24H0z"/><path fill="#078783" d="M3 3h18v18H3z"/><path fill="none" stroke="#fff" stroke-width="2" d="M3 18L8 4l6 14M5 13h7"/><path fill="none" stroke="#fff" d="M18 7v15M12 18h11M16 16h4v4h-4z"/></svg></button>
  <button class="app" aria-label="资源管理器"><svg viewBox="0 0 24 24"><path fill="#e8c060" stroke="#c49a3c" d="M1 3h9l2 2h10v15H1z"/><path fill="#fff" d="M3 5h18v4H3z"/><path fill="#3ca050" d="M3 3h4v2H3z"/><path fill="#d04838" d="M9 4h4v2H9z"/><path fill="#3878c8" d="M15 5h4v2h-4z"/><path fill="#fae49c" stroke="#d8b050" d="M1 8h22v12H1z"/><path fill="#7cbce4" stroke="#4c90c0" d="M4 23v-5c0-2 2-3 4-3h9c2 0 4 1 4 3v5h-4v-4H8v4z"/></svg></button>
  <a class="site" href="#">www.ixx00.com</a>
  <div class="lang">
    <button>CH</button><i class="sep"></i>
    <button aria-label="输入法"><svg viewBox="0 0 16 16"><path fill="#aaa" stroke="#888" d="M1 7h14v7H1zM3 5l5-3v3h5"/><path class="w" stroke-dasharray="2 1" d="M3 9h10M3 12h10"/></svg></button><i class="sep"></i>
    <button aria-label="语言帮助"><svg viewBox="0 0 16 16"><circle cx="8" cy="8" r="7" fill="#1438a8"/><path class="ww" d="M5 6c0-4 6-4 6-1 0 2-3 2-3 4M8 11v2"/></svg></button>
    <button aria-label="麦克风"><svg viewBox="0 0 16 16"><rect x="5" y="1" width="6" height="9" rx="3" fill="#fff" stroke="#333"/><path class="k" d="M3 8c0 6 10 6 10 0M8 12v3"/></svg></button>
    <button aria-label="语言栏选项"><svg viewBox="0 0 16 16"><path class="k" d="M6 3V1h6v3h-2M4 3h6v4H4z"/><path class="d" d="M4 12h7l-3 3z"/></svg></button>
  </div>
  <div class="power"><span class="battery">(1:26)</span></div>
  <div class="notify">
    <button aria-label="输入助手"><svg viewBox="0 0 16 16"><circle cx="8" cy="8" r="6.500" fill="#f8b830" stroke="#d88820"/><path fill="#fff0a0" d="M3 6c2-4 6-4 8-2L8 8z"/><circle cx="3" cy="5" r="2" fill="#d84030"/><path fill="#4890d0" d="M7 2h4v2H7z"/></svg></button>
    <button aria-label="电池"><svg viewBox="0 0 16 16"><rect x="4" y="2" width="8" height="13" rx="2" fill="#fff" stroke="#555"/><path fill="#777" d="M6 4h4v4H6zM6 9h4v4H6z"/></svg></button>
    <button aria-label="安全删除硬件"><svg viewBox="0 0 16 16"><path fill="#777" d="M2 2h5v4l3 3v5H4l-3-6z"/><circle cx="11" cy="11" r="4.500" fill="#30a840"/><path class="w" d="M9 11l2 2 3-4"/></svg></button>
    <button aria-label="音量"><svg viewBox="0 0 16 16"><path fill="#fff" stroke="#888" d="M4 6h3l4-4v12l-4-4H4z"/></svg></button>
    <button aria-label="网络"><svg viewBox="0 0 16 16"><path fill="#777" d="M1 12h2v2H1zM4 10h2v4H4zM7 7h3v7H7zM11 3h3v11h-3z"/><path class="rr" d="M8 7l7 7M15 7l-7 7"/></svg></button>
    <time datetime="2015-12-16T16:57">16:57<br>2015/12/16</time>
    <button aria-label="显示桌面"><svg viewBox="0 0 16 16"><path fill="#1c60b0" stroke="#103c70" d="M1 3h14v8H1z"/><path fill="#6cb0e8" d="M2 4h8l-4 5H2z"/><path class="k" d="M4 13h9"/></svg></button>
  </div>
</footer>

<svg class="mark" viewBox="0 0 180 90" aria-hidden="true">
  <g class="brand">
    <text class="bai" x="0" y="55">Bai</text>
    <ellipse cx="67" cy="22" rx="7" ry="9"/><ellipse cx="79" cy="10" rx="7" ry="9"/><ellipse cx="95" cy="11" rx="7" ry="9"/><ellipse cx="105" cy="26" rx="7" ry="9"/>
    <path d="M86 23c-9 0-10 8-16 13-7 5-6 20 6 20h21c12 0 15-12 7-19-6-6-9-14-18-14z"/>
    <text class="du" x="73" y="50">du</text><text class="jy" x="114" y="53">经验</text>
  </g>
  <text class="url" x="1" y="79">jingyan.baidu.com</text>
</svg>
</body>
</html>
```

FILE: styles.css
```css
* { box-sizing: border-box; }
body {
  margin: 0;
  height: 100vh;
  display: flex;
  flex-direction: column;
  position: relative;
  overflow: hidden;
  background: #d4d0c8;
  color: #222;
  font: 8px/12px "Liberation Mono", "Noto Sans CJK SC", monospace;
}
button, select, input { font: inherit; color: inherit; margin: 0; padding: 0; border: 0; background: none; border-radius: 0; }
button { display: flex; align-items: center; justify-content: center; white-space: nowrap; }
svg { width: 13px; height: 13px; flex: none; display: block; }
i { font-style: normal; flex: none; }
.defs { position: absolute; width: 0; height: 0; }

/* icon paint */
.l { fill: #d3e5f4; stroke: #5580a6; }
.m { fill: #649bcb; stroke: #315f8c; }
.lk { fill: #e2edf5; stroke: #30383f; }
.lk2 { fill: #e2edf5; stroke: #30383f; }
.mk { fill: #68a4d2; stroke: #242f3a; }
.t { fill: #79b4cc; stroke: #2a6788; }
.o { fill: none; stroke: #2a6788; }
.k { fill: none; stroke: #2c2c2c; }
.kk { fill: none; stroke: #222; stroke-width: 2; }
.k2 { fill: none; stroke: #2a5878; }
.b { fill: none; stroke: #2878be; }
.bb { fill: none; stroke: #3474ae; stroke-width: 2; }
.navy { fill: none; stroke: #173f74; stroke-width: 2; }
.gr { fill: none; stroke: #b2b2b4; stroke-width: 2; }
.r { fill: none; stroke: #d03434; }
.rr { fill: none; stroke: #d82c2c; stroke-width: 2; }
.gn { fill: none; stroke: #2c9848; }
.y { fill: #e6c73c; stroke: #80681c; }
.y1 { fill: none; stroke: #e0a810; }
.y2 { fill: #fff59a; stroke: #a89828; }
.w { fill: none; stroke: #fff; }
.ww { fill: none; stroke: #fff; stroke-width: 2; }
.d { fill: #141414; }
.dot { fill: #1c6cb8; }
.sh { fill: #8aa8c4; }

.title { flex: none; display: flex; align-items: center; height: 13px; padding: 0 2px 0 1px; gap: 1px; background: linear-gradient(90deg, #808080, #c0c0c0); }
.title h1 { margin: 0; flex: 1; font-size: 8px; line-height: 13px; font-weight: bold; color: #e6e3dc; white-space: nowrap; }
.title .cjk { font-size: 11px; }
.wins { display: flex; margin-left: auto; }
.wins button { width: 12px; height: 11px; border: 1px solid; border-color: #fff #555 #555 #fff; background: #d4d0c8; }
.wins button:last-child { margin-left: 2px; }
.wins svg { width: 8px; height: 8px; }

.menu { flex: none; display: flex; align-items: center; height: 15px; padding: 0 2px; color: #858585; font-size: 10px; }
.menu > button { padding: 0 2px 0 3px; }
.menu .wins { color: #222; }
small { font-size: 8px; }

.row { flex: none; display: flex; height: 20px; }
.first { height: 21px; }
.third { padding-left: 175px; }
.bar { display: flex; align-items: center; padding-right: 2px; border: 1px solid; border-color: #f4f3ef #aaa69e #aaa69e #f4f3ef; }
.bar button { width: 17px; height: 17px; }
.bar .tiny { width: 8px; }
.bar .wide { width: 18px; }
.grip { width: 5px; height: 16px; margin: 0 2px; border: solid #fff; border-width: 0 1px; box-shadow: 1px 0 #999; }
.sep { width: 2px; height: 15px; margin: 0 1px; border-left: 1px solid #aaa69e; border-right: 1px solid #f4f3ef; }
.combo + .sep { margin: 0 2px; }
.gap { width: 2px; }

.tri { border: 3px solid transparent; border-top-color: #111; border-bottom: 0; }
.tri.blue { border-width: 2px; border-top-color: #204a90; border-bottom: 0; }
.tri.grey { border-width: 2px; border-top-color: #aaa; border-bottom: 0; }
.tri.up { border-top: 0; border-bottom: 3px solid #111; }
.tri.left { border: 3px solid transparent; border-right-color: #111; border-left: 0; }
.tri.rt { border: 3px solid transparent; border-left-color: #111; border-right: 0; }

.combo { display: flex; align-items: center; height: 16px; background: #fff; border: 1px solid; border-color: #666 #eee #eee #666; }
.combo select { appearance: none; flex: 1; min-width: 0; height: 13px; padding-left: 3px; font-family: "Liberation Mono", "Noto Sans CJK SC", monospace; }
.combo svg { width: 12px; height: 12px; }
.ink svg:first-child { margin-left: 1px; }
.drop { display: flex; align-items: center; justify-content: center; width: 11px; height: 13px; background: #d4d0c8; border: 1px solid; border-color: #fff #555 #555 #fff; }
.drop::after { content: ""; border: 3px solid transparent; border-top-color: #111; border-bottom: 0; }
.swatch { width: 8px; height: 8px; margin-left: 2px; background: #80ff00; border: 1px solid #222; }
.thin { width: 44px; height: 1px; margin-left: 2px; background: #222; }
.thick { width: 26px; height: 2px; margin-left: 2px; background: #111; }
.off { background: #d4d0c8; }
.combo.off select { color: #8a8a86; opacity: 1; font-size: 9px; }
.off .drop::after { border-top-color: #888; }
.w72 { width: 72px; }
.w126 { width: 126px; }
.w126 select { padding-left: 5px; }
.w217 { width: 217px; }
.w217 select { font-size: 9px; }
.w109 { width: 109px; }
.w115 { width: 115px; }
.w90 { width: 90px; }
.w87 { width: 87px; }

.work { flex: 1 1 0; display: flex; min-height: 0; overflow: hidden; border-bottom: 1px solid #fff; }
.side { flex: none; display: flex; flex-direction: column; width: 19px; padding: 1px 1px 4px 0; border: 1px solid; border-color: #f4f3ef #888 #aaa69e #f4f3ef; align-self: flex-start; }
.side button { width: 16px; height: 16px; flex: none; }
.right { width: 20px; padding: 1px 1px 0; align-items: center; }
.hgrip { height: 4px; margin: 1px; align-self: stretch; border: solid #fff; border-width: 1px 0; box-shadow: 0 1px #999; }
.split { height: 2px; margin: 4px 0 2px; align-self: stretch; border-top: 1px solid #999; border-bottom: 1px solid #fff; }
.view { flex: 1; min-width: 0; display: flex; flex-direction: column; border: solid #454545; border-width: 1px 0 0 1px; }
.canvas { width: 100%; height: auto; flex: 1 1 0; min-height: 0; background: #000; }
.axis { fill: #c4c4c4; font: 10px "Liberation Sans", sans-serif; }
.tabs { flex: none; display: flex; height: 11px; font-size: 9px; line-height: 11px; }
.nav { width: 14px; border: 1px solid; border-color: #fff #888 #888 #fff; }
.nav svg { width: 10px; height: 10px; }
.edge { width: 6px; height: 11px; }
.tab { font-family: "Noto Sans CJK SC", sans-serif; border-bottom: 1px solid #333; }
.tab.on { background: #000; color: #fff; }

.command { flex: none; display: flex; height: 97px; padding: 7px 5px 1px; border-top: 2px solid #777; margin-top: 2px; gap: 3px; }
.cgrip { width: 4px; border: solid #fff; border-width: 0 1px; box-shadow: 1px 0 #999; }
.console { flex: 1; display: grid; grid-template-columns: 1fr 12px; grid-template-rows: 1fr 15px; border: solid #555; border-width: 1px 0 0 1px; background: #fff; }
.console pre, .prompt { font: 11px/12px "Liberation Mono", "Noto Sans CJK SC", monospace; margin: 0; padding-left: 1px; }
.console pre { overflow: hidden; }
.prompt { display: flex; align-items: center; border-top: 1px solid #999; }
.prompt input { flex: 1; min-width: 0; outline: 0; }
.vscroll { grid-column: 2; grid-row: 1; display: flex; flex-direction: column; }
.prompt { grid-column: 1; grid-row: 2; }
.console::after { content: ""; background: #d4d0c8; }
.vscroll button, .vscroll .thumb { height: 12px; }
.hscroll { display: flex; height: 13px; width: 46px; }
.hscroll button, .hscroll .thumb { width: 12px; }
.command button, .thumb { background: #d4d0c8; border: 1px solid; border-color: #fff #666 #666 #fff; }
.track { flex: 1; background: #ebe9e5; }

.status { flex: none; display: flex; align-items: center; height: 19px; padding: 1px 3px 0 2px; gap: 1px; border-top: 1px solid #999; box-shadow: inset 0 1px #fff; font: 9px/12px "Noto Sans CJK SC", sans-serif; }
.status output { width: 147px; height: 13px; margin-right: 2px; padding-left: 3px; border: 1px solid; border-color: #888 #fff #fff #888; font-family: "Liberation Sans", sans-serif; line-height: 12px; }
.status > button { height: 14px; padding: 0 1px; border: 1px solid; border-color: #f4f3ef #999 #999 #f4f3ef; }
.status > .on { border-color: #666 #fff #fff #666; background: #e2dfd9; }
.status > .lat { font: 8px/12px "Liberation Mono", monospace; }
.tray { display: flex; gap: 3px; margin-left: auto; padding: 0 1px; border: 1px solid; border-color: #888 #fff #fff #888; }
.tray svg { height: 12px; }
.status > .more { width: 14px; border: 0; }
.status > .clean { width: 14px; padding: 0; border: 0; }

.taskbar { flex: none; display: flex; align-items: center; height: 31px; padding: 0 2px; border-top: 1px solid #f4f3ef; }
.start, .app { height: 28px; border: 1px solid; border-color: #fff #666 #666 #fff; }
.start { width: 34px; font: 9px/12px "Noto Sans CJK SC", sans-serif; margin-right: 7px; }
.app { width: 35px; margin-right: 1px; }
.app svg { width: 24px; height: 24px; }
.site { margin: 0 auto 0 263px; color: #222; text-decoration: none; }
.lang { display: flex; align-items: center; gap: 1px; margin-right: 4px; }
.lang button { min-width: 14px; }
.lang .sep { height: 18px; margin: 0 2px; }
.power { display: flex; align-items: center; justify-content: center; width: 65px; height: 28px; border: 1px solid; border-color: #f4f3ef #888 #888 #d4d0c8; border-radius: 6px 0 0 0; }
.battery { width: 42px; height: 12px; padding-left: 4px; border: 1px solid #111; border-right-width: 2px; background: linear-gradient(90deg, #16934b 40%, #111 40%); color: #fff; font: bold 9px/10px "Liberation Mono", monospace; }
.notify { display: flex; align-items: center; gap: 4px; padding-left: 3px; }
.notify time { text-align: center; font-size: 8px; line-height: 12px; margin: 0 -3px; }

.mark { position: absolute; right: 52px; bottom: 17px; width: 180px; height: 90px; pointer-events: none; }
.brand { fill: #fff; fill-opacity: .85; stroke: #d2d2d2; }
.bai { font: bold 38px "Liberation Sans", sans-serif; }
.du { font: bold 22px "Liberation Sans", sans-serif; }
.jy { font: bold 30px "Noto Sans CJK SC", sans-serif; }
.url { font: 20px "Open Sans", sans-serif; fill: #fff; fill-opacity: .85; }
```
